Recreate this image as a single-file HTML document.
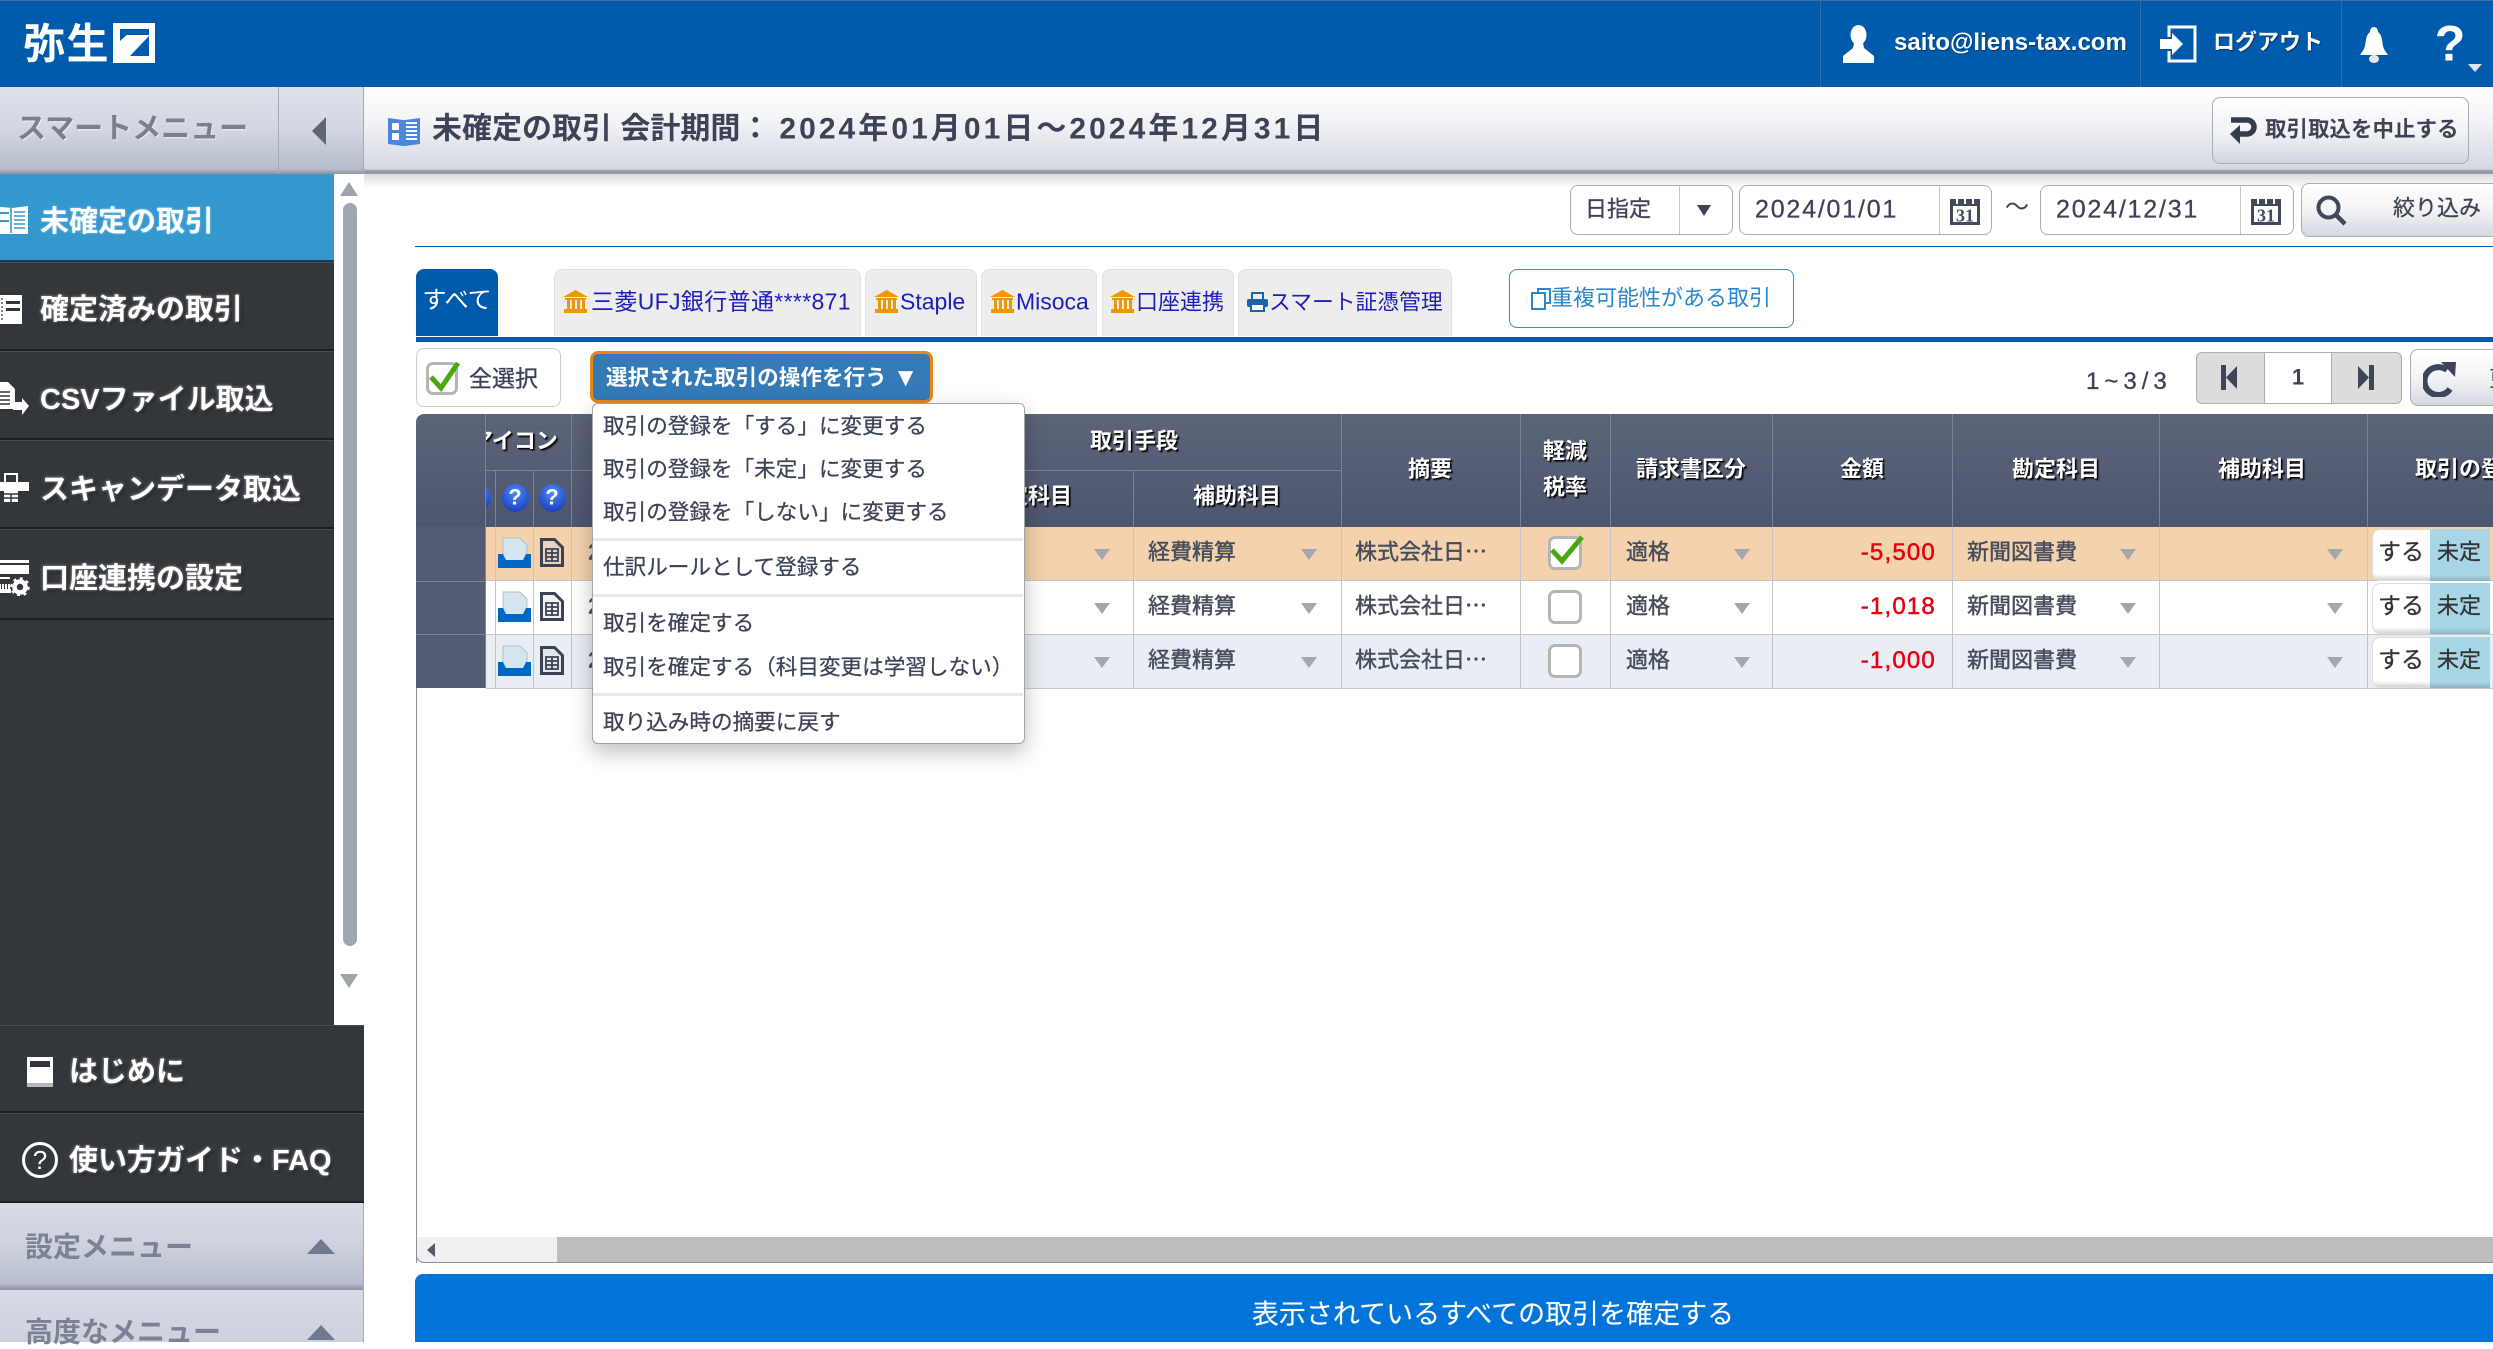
<!DOCTYPE html>
<html lang="ja"><head><meta charset="utf-8"><title>未確定の取引</title>
<style>
html,body{margin:0;padding:0}
body{width:2493px;height:1342px;overflow:hidden;position:relative;background:#fff;font-family:"Liberation Sans","Noto Sans CJK JP",sans-serif;color:#3c4356}
div,span,svg{position:absolute;box-sizing:border-box}
.t{white-space:nowrap;transform:translateY(calc(-50% + 1.500px));line-height:1.2}
.c{white-space:nowrap;transform:translate(-50%,calc(-50% + 1.500px));line-height:1.2}
.n{position:static}
.m{font-size:29px;font-weight:700;color:#fff;text-shadow:0 0 3px rgba(255,255,255,.55),2px 2px 3px rgba(0,0,0,.55)}
.h{font-size:22px;font-weight:700;color:#fff;text-shadow:1px 1px 1px #000,2px 2px 1px rgba(0,0,0,.6)}
.i{height:89px;left:0;width:334px;background:#33373c;border-bottom:2px solid #1c1e21;box-shadow:inset 0 1px 0 #484c52}
.tab{top:269px;height:67px;background:#ededed;border:1px solid #e0e0e0;border-bottom:0;border-radius:8px 8px 0 0}
.tt{font-size:22px;color:#1d1dbb;top:301px}
.d{font-size:21.600px;color:#3c4356;left:603px;-webkit-text-stroke:.25px #3c4356}
.sep{left:593px;width:430px;height:3px;background:#e8e8e8}
.r{left:416px;width:2077px;height:54px;border-bottom:1px solid #c8c8c8}
.v{width:1px;background:#c4c4c4;top:527px;height:161px}
.hv{width:1px;background:#7b8397}
.cell{font-size:22px;color:#454c5c;-webkit-text-stroke:.4px #454c5c}
.tri{width:0;height:0;border-left:8px solid transparent;border-right:8px solid transparent;border-top:11px solid #a4a7ad}
.cb{width:34px;height:34px;border:3px solid #b5b5b5;border-radius:7px;background:#fff}
.amt{font-size:24px;color:#e60012;right:557px;letter-spacing:1.200px;-webkit-text-stroke:.5px #e60012}
.box{background:#fff;border:1px solid #a9adb5;border-radius:8px}
.fr{left:416px;width:70px;background:#535c73}
.st{-webkit-text-stroke:.3px #3c4356}
</style></head><body>

<!-- header -->
<div style="left:0;top:0;width:2493px;height:87px;background:#005bac;border-top:1px solid #3f6f9e"></div>
<span class="t" style="left:23px;top:43px;font-size:42px;font-weight:700;color:#fff;letter-spacing:1.500px">弥生</span>
<svg style="left:113px;top:23px" width="42" height="40" viewBox="0 0 42 40"><rect width="42" height="40" fill="#fff"/><path d="M7 6H36V9H17L7 18z" fill="#005bac"/><path d="M8 6H36V12H14z" fill="#005bac"/><path d="M36 13V33H17z" fill="#005bac"/></svg>
<div style="left:1820px;top:1px;width:1px;height:86px;background:#2c6ea8"></div>
<div style="left:2140px;top:1px;width:1px;height:86px;background:#2c6ea8"></div>
<div style="left:2341px;top:1px;width:1px;height:86px;background:#2c6ea8"></div>
<svg style="left:1843px;top:25px" width="31" height="38" viewBox="0 0 31 38"><ellipse cx="15.500" cy="10" rx="8" ry="10" fill="#fff"/><path d="M11 18h9l1 5 10 8v7H0v-7l10-8z" fill="#fff"/></svg>
<span class="t" style="left:1894px;top:42px;font-size:24px;font-weight:700;color:#fff;text-shadow:1px 1px 1px rgba(0,0,0,.4)">saito@liens-tax.com</span>
<svg style="left:2160px;top:25px" width="37" height="38" viewBox="0 0 37 38"><path d="M9 12V2h26v34H9V26" fill="none" stroke="#fff" stroke-width="3"/><path d="M0 14h12V8l11 11-11 11v-6H0z" fill="#fff"/></svg>
<span class="t" style="left:2213px;top:41px;font-size:22px;font-weight:700;color:#fff;text-shadow:1px 1px 1px rgba(0,0,0,.4)">ログアウト</span>
<svg style="left:2359px;top:26px" width="32" height="38" viewBox="0 0 32 38"><path d="M15 1c3 0 4 3 4 5 4 3 4 8 5 14 1 4 3 6 5 9H1c2-3 4-5 5-9 1-6 1-11 5-14 0-2 1-5 4-5z" fill="#fff"/><ellipse cx="15" cy="33" rx="5" ry="4" fill="#e5e8ee"/></svg>
<span class="c" style="left:2450px;top:42px;font-size:50px;font-weight:700;color:#fff;font-family:'Liberation Sans',sans-serif">?</span>
<div style="left:2468px;top:64px;width:0;height:0;border-left:7px solid transparent;border-right:7px solid transparent;border-top:8px solid #dfe6ef"></div>

<!-- sub bar -->
<div style="left:0;top:87px;width:364px;height:87px;background:linear-gradient(#dfe2ea 0%,#d2d6e1 50%,#b6bccb 94%,#8e93a1 100%);border-right:1px solid #a5a9b5"></div>
<div style="left:278px;top:87px;width:1px;height:87px;background:#a5aab7"></div>
<span class="t" style="left:17px;top:128px;font-size:29px;font-weight:700;color:#7b8090;text-shadow:1px 1px 1px rgba(255,255,255,.6)">スマートメニュー</span>
<div style="left:312px;top:117px;width:0;height:0;border-top:14px solid transparent;border-bottom:14px solid transparent;border-right:14px solid #5f6675"></div>
<div style="left:364px;top:87px;width:2129px;height:87px;background:linear-gradient(#fff 0%,#f2f3f6 40%,#d5d8e2 94%,#8f929b 97%,#9a9da5 100%)"></div>
<div style="left:364px;top:174px;width:2129px;height:14px;background:linear-gradient(rgba(0,0,0,.14),rgba(0,0,0,0))"></div>
<svg style="left:388px;top:117px" width="32" height="29" viewBox="0 0 32 29"><path d="M0 1l15 2 2 0 15-2v26l-15 2-2 0-15-2z" fill="#4a86e0"/><path d="M18 6h11M18 10h11M18 14h11M18 18h11M18 22h11" stroke="#fff" stroke-width="2"/><rect x="4" y="6" width="7" height="7" fill="#fff"/><rect x="4" y="16" width="7" height="7" fill="#fff"/></svg>
<span class="t" style="left:432px;top:128px;font-size:30px;font-weight:700;color:#3c4356">未確定の取引 会計期間：<span class="n" style="letter-spacing:3.050px;margin-left:9px">2024年01月01日～2024年12月31日</span></span>
<div style="left:2212px;top:97px;width:257px;height:67px;border:1px solid #a9adb5;border-radius:8px;background:linear-gradient(#fff 0%,#f1f2f5 55%,#d2d5de 100%)"></div>
<svg style="left:2229px;top:117px" width="28" height="30" viewBox="0 0 28 30"><path d="M2 3h16a7 7 0 0 1 0 14H9" fill="none" stroke="#333b4d" stroke-width="5.500"/><path d="M11 8L1 17l10 10z" fill="#333b4d"/></svg>
<span class="t" style="left:2265px;top:129px;font-size:21.500px;font-weight:700;color:#3c4356">取引取込を中止する</span>

<!-- sidebar -->
<div style="left:0;top:174px;width:334px;height:88px;background:#3498cf;border-bottom:2px solid #1c3a4c"></div>
<div class="i" style="top:262px"></div><div class="i" style="top:351px"></div><div class="i" style="top:440px"></div><div class="i" style="top:529px;height:91px"></div>
<div style="left:0;top:620px;width:334px;height:405px;background:#33373c"></div>
<svg style="left:0;top:205px" width="28" height="30" viewBox="0 0 28 30"><path d="M-10 1l22 2 16-2v28l-16 0-22 0z" fill="#fff"/><path d="M11 3v25M14 7h11M14 11h11M14 15h11M14 19h11M14 23h11" stroke="#3498cf" stroke-width="1.600"/><path d="M0 8h9M0 16h9" stroke="#3498cf" stroke-width="2"/></svg>
<span class="t m" style="left:40px;top:221px;text-shadow:0 0 2px rgba(255,255,255,.5)">未確定の取引</span>
<svg style="left:0;top:295px" width="22" height="29" viewBox="0 0 22 29"><rect x="0" y="0" width="22" height="29" fill="#fff"/><path d="M6 6h14v3H6zM6 13h14v3H6z" fill="#33373c"/><path d="M2 3v24" stroke="#888" stroke-width="2" stroke-dasharray="2 2"/></svg>
<span class="t m" style="left:40px;top:309px">確定済みの取引</span>
<svg style="left:0;top:380px" width="30" height="37" viewBox="0 0 30 37"><path d="M-3 2H8l7 7v20H-3z" fill="#fff"/><path d="M0 12h10M0 16h10M0 20h10M0 24h10" stroke="#33373c" stroke-width="1.600"/><path d="M13 22h9v-4l7 8-7 9v-5h-9z" fill="#fff"/></svg>
<span class="t m" style="left:40px;top:399px">CSVファイル取込</span>
<svg style="left:0;top:472px" width="30" height="31" viewBox="0 0 30 31"><rect x="5" y="2" width="12" height="9" fill="none" stroke="#fff" stroke-width="2"/><rect x="0" y="10" width="29" height="9" fill="#fff"/><rect x="4" y="19" width="14" height="11" fill="#fff"/><path d="M4 22h14M4 26h14M11 22v8" stroke="#33373c" stroke-width="1.500"/></svg>
<span class="t m" style="left:40px;top:489px">スキャンデータ取込</span>
<svg style="left:0;top:558px" width="30" height="38" viewBox="0 0 30 38"><rect x="0" y="2" width="29" height="3" fill="#fff"/><rect x="0" y="7" width="29" height="9" fill="#fff"/><rect x="0" y="19" width="10" height="2" fill="#fff"/><path d="M0 26h1v5h1v-5h2v5h1v-5h2v5h1v-5h2v5h1v4H0z" fill="#fff"/><circle cx="20" cy="29" r="5.500" fill="none" stroke="#fff" stroke-width="4.500"/><circle cx="20" cy="29" r="8.500" fill="none" stroke="#fff" stroke-width="2.500" stroke-dasharray="3 3.600"/></svg>
<span class="t m" style="left:40px;top:578px">口座連携の設定</span>

<!-- side scrollbar -->
<div style="left:334px;top:174px;width:30px;height:851px;background:#fff"></div>
<div style="left:340px;top:182px;width:0;height:0;border-left:9px solid transparent;border-right:9px solid transparent;border-bottom:14px solid #9ea3ad"></div>
<div style="left:343px;top:203px;width:14px;height:743px;border-radius:7px;background:#a0a6b2"></div>
<div style="left:340px;top:974px;width:0;height:0;border-left:9px solid transparent;border-right:9px solid transparent;border-top:14px solid #9ea3ad"></div>

<div style="left:0;top:1025px;width:364px;height:88px;background:#33373c;border-top:1px solid #484c52;border-bottom:2px solid #1c1e21"></div>
<div style="left:0;top:1113px;width:364px;height:90px;background:#33373c;border-top:1px solid #484c52;border-bottom:2px solid #1c1e21"></div>
<svg style="left:27px;top:1057px" width="26" height="30" viewBox="0 0 26 30"><rect width="26" height="30" fill="#fff"/><rect x="3" y="4" width="20" height="6" fill="#33373c"/><rect y="26" width="26" height="4" fill="#b4b8c0"/></svg>
<span class="t m" style="left:69px;top:1071px">はじめに</span>
<svg style="left:21px;top:1141px" width="38" height="38" viewBox="0 0 38 38"><circle cx="19" cy="19" r="16.500" fill="none" stroke="#fff" stroke-width="3"/><text x="19" y="28" text-anchor="middle" font-size="26" fill="#fff" font-family="Liberation Sans">?</text></svg>
<span class="t m" style="left:69px;top:1160px">使い方ガイド・FAQ</span>
<div style="left:0;top:1203px;width:364px;height:87px;background:linear-gradient(#d8dbe5 0%,#cfd3df 45%,#b8becd 92%,#8e93a1 100%);border-right:1px solid #a5a9b5"></div>
<div style="left:0;top:1290px;width:364px;height:52px;background:linear-gradient(#d8dbe5 0%,#cdd1dd 100%);border-right:1px solid #a5a9b5"></div>
<span class="t" style="left:25px;top:1246px;font-size:28px;font-weight:700;color:#7b8293">設定メニュー</span>
<span class="t" style="left:25px;top:1331px;font-size:28px;font-weight:700;color:#7b8293">高度なメニュー</span>
<div style="left:307px;top:1239px;width:0;height:0;border-left:14px solid transparent;border-right:14px solid transparent;border-bottom:15px solid #6e7a8f"></div>
<div style="left:307px;top:1325px;width:0;height:0;border-left:14px solid transparent;border-right:14px solid transparent;border-bottom:15px solid #6e7a8f"></div>

<!-- filter row -->
<div class="box" style="left:1570px;top:185px;width:163px;height:50px"></div>
<div style="left:1679px;top:186px;width:1px;height:48px;background:#c8c8c8"></div>
<span class="t st" style="left:1585px;top:208px;font-size:22px;color:#3c4356">日指定</span>
<div style="left:1697px;top:205px;width:0;height:0;border-left:7px solid transparent;border-right:7px solid transparent;border-top:11px solid #3c4356"></div>
<div class="box" style="left:1739px;top:185px;width:253px;height:50px"></div>
<div style="left:1939px;top:186px;width:1px;height:48px;background:#c8c8c8"></div>
<span class="t st" style="left:1755px;top:208px;font-size:25px;letter-spacing:1.800px;color:#3c4356">2024/01/01</span>
<svg style="left:1950px;top:196px" width="30" height="29" viewBox="0 0 30 29"><rect y="3" width="30" height="26" fill="#414a5c"/><rect x="3" y="10" width="24" height="16" fill="#fff"/><path d="M7 0v8M15 0v8M23 0v8" stroke="#fff" stroke-width="2"/><text x="15" y="25.500" text-anchor="middle" font-size="18" font-weight="700" fill="#414a5c" font-family="Liberation Serif">31</text></svg>
<span class="t" style="left:2005px;top:207px;font-size:24px;color:#3c4356">～</span>
<div class="box" style="left:2040px;top:185px;width:254px;height:50px"></div>
<div style="left:2240px;top:186px;width:1px;height:48px;background:#c8c8c8"></div>
<span class="t st" style="left:2056px;top:208px;font-size:25px;letter-spacing:1.800px;color:#3c4356">2024/12/31</span>
<svg style="left:2251px;top:196px" width="30" height="29" viewBox="0 0 30 29"><rect y="3" width="30" height="26" fill="#414a5c"/><rect x="3" y="10" width="24" height="16" fill="#fff"/><path d="M7 0v8M15 0v8M23 0v8" stroke="#fff" stroke-width="2"/><text x="15" y="25.500" text-anchor="middle" font-size="18" font-weight="700" fill="#414a5c" font-family="Liberation Serif">31</text></svg>
<div style="left:2301px;top:183px;width:200px;height:54px;border:1px solid #a9adb5;border-radius:8px;background:linear-gradient(#fff 0%,#f3f4f6 50%,#d5d8e0 100%)"></div>
<svg style="left:2316px;top:195px" width="31" height="31" viewBox="0 0 31 31"><circle cx="12.500" cy="12.500" r="10" fill="none" stroke="#404859" stroke-width="4"/><path d="M20 20l9 9" stroke="#404859" stroke-width="4.500"/></svg>
<span class="t st" style="left:2393px;top:207px;font-size:22px;color:#3c4356">絞り込み</span>
<div style="left:415px;top:246px;width:2078px;height:1px;background:#005bac"></div>

<!-- tabs -->
<div class="tab" style="left:416px;width:82px;background:#005bac;border:0"></div>
<span class="c" style="left:457px;top:300px;font-size:24px;color:#fff">すべて</span>
<div class="tab" style="left:554px;width:307px"></div>
<div class="tab" style="left:865px;width:112px"></div>
<div class="tab" style="left:981px;width:116px"></div>
<div class="tab" style="left:1102px;width:132px"></div>
<div class="tab" style="left:1238px;width:214px"></div>
<svg style="left:563px;top:290px" width="25" height="23" viewBox="0 0 25 23"><path d="M12.500 0L25 7H0z" fill="#ee9800"/><path d="M2 8h21v2H2zM4 10h3v9H4zM9 10h3v9H9zM14 10h3v9h-3zM19 10h3v9h-3zM1 19h23v4H1z" fill="#ee9800"/></svg>
<span class="t tt" style="left:591px;letter-spacing:.35px;font-size:23px">三菱UFJ銀行普通****871</span>
<svg style="left:874px;top:290px" width="25" height="23" viewBox="0 0 25 23"><path d="M12.500 0L25 7H0z" fill="#ee9800"/><path d="M2 8h21v2H2zM4 10h3v9H4zM9 10h3v9H9zM14 10h3v9h-3zM19 10h3v9h-3zM1 19h23v4H1z" fill="#ee9800"/></svg>
<span class="t tt" style="left:900px;font-size:23px">Staple</span>
<svg style="left:990px;top:290px" width="25" height="23" viewBox="0 0 25 23"><path d="M12.500 0L25 7H0z" fill="#ee9800"/><path d="M2 8h21v2H2zM4 10h3v9H4zM9 10h3v9H9zM14 10h3v9h-3zM19 10h3v9h-3zM1 19h23v4H1z" fill="#ee9800"/></svg>
<span class="t tt" style="left:1016px;font-size:23px">Misoca</span>
<svg style="left:1110px;top:290px" width="25" height="23" viewBox="0 0 25 23"><path d="M12.500 0L25 7H0z" fill="#ee9800"/><path d="M2 8h21v2H2zM4 10h3v9H4zM9 10h3v9H9zM14 10h3v9h-3zM19 10h3v9h-3zM1 19h23v4H1z" fill="#ee9800"/></svg>
<span class="t tt" style="left:1136px">口座連携</span>
<svg style="left:1247px;top:291px" width="21" height="21" viewBox="0 0 21 21"><path d="M5 8V2h11v6" fill="none" stroke="#1764a8" stroke-width="2"/><rect y="8" width="21" height="8" rx="2" fill="#1764a8"/><rect x="4" y="13" width="13" height="7" fill="#fff" stroke="#1764a8" stroke-width="2"/></svg>
<span class="t tt" style="left:1269px;font-size:21.800px">スマート証憑管理</span>
<div style="left:1509px;top:269px;width:285px;height:59px;border:1.500px solid #3a8bc8;border-radius:8px;background:#fff"></div>
<svg style="left:1531px;top:288px" width="21" height="22" viewBox="0 0 21 22"><rect x="1" y="5" width="13" height="16" fill="#fff" stroke="#2b87cc" stroke-width="2"/><path d="M7 4V1h12v14h-4" fill="none" stroke="#2b87cc" stroke-width="2"/></svg>
<span class="t" style="left:1551px;top:297px;font-size:22px;color:#2b87cc">重複可能性がある取引</span>
<div style="left:416px;top:337px;width:2077px;height:5px;background:#005bac"></div>

<!-- toolbar -->
<div style="left:416px;top:348px;width:145px;height:59px;border:1px solid #ccc;border-radius:8px;background:#fff"></div>
<div class="cb" style="left:426px;top:362px;height:33px;width:32px"></div>
<svg style="left:428px;top:360px" width="34" height="34" viewBox="0 0 34 34"><path d="M3 17l10 11L30 3" fill="none" stroke="#48a80f" stroke-width="5"/></svg>
<span class="t st" style="left:469px;top:378px;font-size:23px;color:#3c4356">全選択</span>
<span class="t st" style="left:2086px;top:381px;font-size:24px;letter-spacing:5px;color:#3c4356">1~3/3</span>
<div style="left:2196px;top:352px;width:206px;height:52px;border:1px solid #a9adb5;border-radius:6px;background:#dcdcdc"></div>
<div style="left:2264px;top:353px;width:68px;height:50px;background:#fff;border-left:1px solid #a9adb5;border-right:1px solid #a9adb5"></div>
<span class="c" style="left:2298px;top:376px;font-size:22px;color:#3c4356;font-weight:700">1</span>
<svg style="left:2221px;top:365px" width="16" height="25" viewBox="0 0 16 25"><rect width="5" height="25" fill="#3c4658"/><path d="M16 1v23L5 12.500z" fill="#3c4658"/></svg>
<svg style="left:2358px;top:365px" width="16" height="25" viewBox="0 0 16 25"><rect x="11" width="5" height="25" fill="#3c4658"/><path d="M0 1v23l11-11.500z" fill="#3c4658"/></svg>
<div style="left:2410px;top:349px;width:100px;height:57px;border:1px solid #a9adb5;border-radius:8px;background:linear-gradient(#fff 0%,#f3f4f6 50%,#d5d8e0 100%)"></div>
<svg style="left:2423px;top:361px" width="34" height="36" viewBox="0 0 34 36"><path d="M27 28A14 14 0 1 1 24 9" fill="none" stroke="#3c4658" stroke-width="6"/><path d="M18 1l15 0-1 15z" fill="#3c4658"/></svg>
<span class="t" style="left:2489px;top:378px;font-size:22px;color:#3c4356">更</span>

<!-- table header -->
<div style="left:416px;top:414px;width:2077px;height:113px;border-radius:8px 0 0 0;background:linear-gradient(#5c6479,#4e566f)"></div>
<div class="fr" style="top:527px;height:161px"></div>
<div style="left:416px;top:581px;width:70px;height:1px;background:#7b8397"></div>
<div style="left:416px;top:634px;width:70px;height:1px;background:#7b8397"></div>
<div class="hv" style="left:485px;top:414px;height:274px"></div>
<div class="hv" style="left:571px;top:414px;height:113px"></div>
<div class="hv" style="left:495px;top:470px;height:57px"></div>
<div class="hv" style="left:533px;top:470px;height:57px"></div>
<div style="left:486px;top:470px;width:855px;height:1px;background:#7b8397"></div>
<div class="hv" style="left:1133px;top:470px;height:57px"></div>
<div class="hv" style="left:1341px;top:414px;height:113px"></div>
<div class="hv" style="left:1520px;top:414px;height:113px"></div>
<div class="hv" style="left:1610px;top:414px;height:113px"></div>
<div class="hv" style="left:1772px;top:414px;height:113px"></div>
<div class="hv" style="left:1952px;top:414px;height:113px"></div>
<div class="hv" style="left:2159px;top:414px;height:113px"></div>
<div class="hv" style="left:2367px;top:414px;height:113px"></div>
<div style="left:486px;top:414px;width:85px;height:56px;overflow:hidden"><span class="t h" style="left:-15px;top:26px">アイコン</span></div>
<div style="left:486px;top:484px;width:9px;height:28px;overflow:hidden"><div style="left:-22px;top:0;width:27px;height:27px;border-radius:50%;background:radial-gradient(circle at 50% 30%,#4d8df0,#0f2fb5)"></div></div>
<div style="left:502px;top:484px;width:27px;height:28px;border-radius:50%;background:radial-gradient(circle at 50% 30%,#4d8df0,#0f2fb5)"></div>
<span class="c" style="left:515px;top:496px;font-size:22px;font-weight:700;color:#fff;font-family:'Liberation Sans',sans-serif">?</span>
<div style="left:539px;top:484px;width:27px;height:28px;border-radius:50%;background:radial-gradient(circle at 50% 30%,#4d8df0,#0f2fb5)"></div>
<span class="c" style="left:552px;top:496px;font-size:22px;font-weight:700;color:#fff;font-family:'Liberation Sans',sans-serif">?</span>
<span class="c h" style="left:1134px;top:440px">取引手段</span>
<span class="c h" style="left:1028px;top:495px">勘定科目</span>
<span class="c h" style="left:1237px;top:495px">補助科目</span>
<span class="c h" style="left:1430px;top:468px">摘要</span>
<span class="c h" style="left:1565px;top:450px">軽減</span>
<span class="c h" style="left:1565px;top:486px">税率</span>
<span class="c h" style="left:1691px;top:468px">請求書区分</span>
<span class="c h" style="left:1862px;top:468px">金額</span>
<span class="c h" style="left:2056px;top:468px">勘定科目</span>
<span class="c h" style="left:2262px;top:468px">補助科目</span>
<span class="t h" style="left:2415px;top:468px">取引の登録</span>

<!-- rows -->
<div class="r" style="left:486px;width:2007px;top:527px;background:#f3d2ad"></div>
<div class="r" style="left:486px;width:2007px;top:581px;background:#fff"></div>
<div class="r" style="left:486px;width:2007px;top:635px;background:#e9eef4"></div>
<div class="v" style="left:495px"></div><div class="v" style="left:533px"></div><div class="v" style="left:571px"></div>
<div class="v" style="left:1133px"></div><div class="v" style="left:1341px"></div><div class="v" style="left:1520px"></div><div class="v" style="left:1610px"></div><div class="v" style="left:1772px"></div><div class="v" style="left:1952px"></div><div class="v" style="left:2159px"></div><div class="v" style="left:2367px"></div>

<!-- row icons -->
<svg style="left:498px;top:537px" width="33" height="32" viewBox="0 0 33 32"><path d="M5 1h17l7 7v20H5z" fill="#d6e6ee" stroke="#b8bcc0"/><path d="M0 17h5l3 6h17l3-6h5v14H0z" fill="#0068c4"/></svg>
<svg style="left:540px;top:538px" width="24" height="29" viewBox="0 0 24 29"><path d="M1.500 1.500h13l8 8v18h-21z" fill="#d6dae0" fill-opacity=".35" stroke="#3b4252" stroke-width="3"/><path d="M6 11h12v12H6zM6 15h12M6 19h12M12 11v12" fill="none" stroke="#3b4252" stroke-width="1.800"/></svg>
<svg style="left:498px;top:591px" width="33" height="32" viewBox="0 0 33 32"><path d="M5 1h17l7 7v20H5z" fill="#d6e6ee" stroke="#b8bcc0"/><path d="M0 17h5l3 6h17l3-6h5v14H0z" fill="#0068c4"/></svg>
<svg style="left:540px;top:592px" width="24" height="29" viewBox="0 0 24 29"><path d="M1.500 1.500h13l8 8v18h-21z" fill="#d6dae0" fill-opacity=".35" stroke="#3b4252" stroke-width="3"/><path d="M6 11h12v12H6zM6 15h12M6 19h12M12 11v12" fill="none" stroke="#3b4252" stroke-width="1.800"/></svg>
<svg style="left:498px;top:645px" width="33" height="32" viewBox="0 0 33 32"><path d="M5 1h17l7 7v20H5z" fill="#d6e6ee" stroke="#b8bcc0"/><path d="M0 17h5l3 6h17l3-6h5v14H0z" fill="#0068c4"/></svg>
<svg style="left:540px;top:646px" width="24" height="29" viewBox="0 0 24 29"><path d="M1.500 1.500h13l8 8v18h-21z" fill="#d6dae0" fill-opacity=".35" stroke="#3b4252" stroke-width="3"/><path d="M6 11h12v12H6zM6 15h12M6 19h12M12 11v12" fill="none" stroke="#3b4252" stroke-width="1.800"/></svg>

<!-- row 1 -->
<div class="tri" style="left:1094px;top:549px"></div>
<span class="t cell" style="left:1148px;top:551px">経費精算</span><div class="tri" style="left:1301px;top:549px"></div>
<span class="t cell" style="left:1355px;top:551px">株式会社日⋯</span>
<div class="cb" style="left:1548px;top:536px"></div>
<svg style="left:1549px;top:535px" width="36" height="30" viewBox="0 0 36 30"><path d="M3 15l10 11L33 2" fill="none" stroke="#48a80f" stroke-width="5"/></svg>
<span class="t cell" style="left:1626px;top:551px">適格</span><div class="tri" style="left:1734px;top:549px"></div>
<span class="t amt" style="top:552px">-5,500</span>
<span class="t cell" style="left:1967px;top:551px">新聞図書費</span><div class="tri" style="left:2120px;top:549px"></div><div class="tri" style="left:2327px;top:549px"></div>
<!-- row 2 -->
<div class="tri" style="left:1094px;top:603px"></div>
<span class="t cell" style="left:1148px;top:605px">経費精算</span><div class="tri" style="left:1301px;top:603px"></div>
<span class="t cell" style="left:1355px;top:605px">株式会社日⋯</span>
<div class="cb" style="left:1548px;top:590px"></div>
<span class="t cell" style="left:1626px;top:605px">適格</span><div class="tri" style="left:1734px;top:603px"></div>
<span class="t amt" style="top:606px">-1,018</span>
<span class="t cell" style="left:1967px;top:605px">新聞図書費</span><div class="tri" style="left:2120px;top:603px"></div><div class="tri" style="left:2327px;top:603px"></div>
<!-- row 3 -->
<div class="tri" style="left:1094px;top:657px"></div>
<span class="t cell" style="left:1148px;top:659px">経費精算</span><div class="tri" style="left:1301px;top:657px"></div>
<span class="t cell" style="left:1355px;top:659px">株式会社日⋯</span>
<div class="cb" style="left:1548px;top:644px"></div>
<span class="t cell" style="left:1626px;top:659px">適格</span><div class="tri" style="left:1734px;top:657px"></div>
<span class="t amt" style="top:660px">-1,000</span>
<span class="t cell" style="left:1967px;top:659px">新聞図書費</span><div class="tri" style="left:2120px;top:657px"></div><div class="tri" style="left:2327px;top:657px"></div>

<!-- する/未定 -->
<div style="left:2372px;top:529px;width:58px;height:52px;background:linear-gradient(#fff 88%,#d0d3d8);border-radius:8px 0 0 8px;border:1px solid #ddd;border-right:0"></div>
<div style="left:2430px;top:529px;width:60px;height:52px;background:linear-gradient(#a8d6e6 88%,#8ab4c4)"></div>
<span class="c" style="left:2401px;top:551px;font-size:23px;color:#333;-webkit-text-stroke:.3px #333">する</span><span class="c" style="left:2459px;top:551px;font-size:22px;color:#333;-webkit-text-stroke:.3px #333">未定</span>
<div style="left:2372px;top:583px;width:58px;height:51px;background:linear-gradient(#fff 88%,#d0d3d8);border-radius:8px 0 0 8px;border:1px solid #ddd;border-right:0"></div>
<div style="left:2430px;top:583px;width:60px;height:51px;background:linear-gradient(#a8d6e6 88%,#8ab4c4)"></div>
<span class="c" style="left:2401px;top:605px;font-size:23px;color:#333;-webkit-text-stroke:.3px #333">する</span><span class="c" style="left:2459px;top:605px;font-size:22px;color:#333;-webkit-text-stroke:.3px #333">未定</span>
<div style="left:2372px;top:637px;width:58px;height:51px;background:linear-gradient(#fff 88%,#d0d3d8);border-radius:8px 0 0 8px;border:1px solid #ddd;border-right:0"></div>
<div style="left:2430px;top:637px;width:60px;height:51px;background:linear-gradient(#a8d6e6 88%,#8ab4c4)"></div>
<span class="c" style="left:2401px;top:659px;font-size:23px;color:#333;-webkit-text-stroke:.3px #333">する</span><span class="c" style="left:2459px;top:659px;font-size:22px;color:#333;-webkit-text-stroke:.3px #333">未定</span>

<!-- panel bottom -->
<div style="left:416px;top:688px;width:1px;height:575px;background:#8b8f98"></div>
<div style="left:416px;top:1237px;width:141px;height:26px;background:#f0f0f0;border-bottom:1px solid #8b8f98;border-left:1px solid #8b8f98;border-radius:0 0 0 8px"></div>
<div style="left:557px;top:1237px;width:1936px;height:26px;background:#bdbdbd;border-bottom:1px solid #8b8f98"></div>
<div style="left:427px;top:1243px;width:0;height:0;border-top:7px solid transparent;border-bottom:7px solid transparent;border-right:8px solid #555b66"></div>
<div style="left:415px;top:1274px;width:2078px;height:68px;background:#0074d9;border-radius:8px 0 0 0"></div>
<span class="c" style="left:1493px;top:1313px;font-size:27px;color:#fff;text-shadow:0 0 1px rgba(255,255,255,.4)">表示されているすべての取引を確定する</span>

<!-- row id digits behind dropdown -->
<span class="t cell" style="left:588px;top:551px">2</span>
<span class="t cell" style="left:588px;top:605px">2</span>
<span class="t cell" style="left:588px;top:659px">2</span>

<!-- action button -->
<div style="left:590px;top:351px;width:343px;height:52px;background:#337ab7;border:3px solid #e8861a;border-radius:8px"></div>
<span class="t" style="left:606px;top:376px;font-size:21.600px;font-weight:700;color:#fff">選択された取引の操作を行う <span class="n" style="font-size:26px;vertical-align:-1px">▼</span></span>

<!-- dropdown -->
<div style="left:592px;top:403px;width:433px;height:341px;background:#fff;border:1px solid #a5a5a5;border-radius:6px;box-shadow:0 8px 22px rgba(0,0,0,.26);z-index:2"></div>
<div style="z-index:3;left:0;top:0;width:0;height:0">
<span class="t d" style="top:425px">取引の登録を「する」に変更する</span>
<span class="t d" style="top:468px">取引の登録を「未定」に変更する</span>
<span class="t d" style="top:511px">取引の登録を「しない」に変更する</span>
<div class="sep" style="top:538px"></div>
<span class="t d" style="top:566px">仕訳ルールとして登録する</span>
<div class="sep" style="top:594px"></div>
<span class="t d" style="top:622px">取引を確定する</span>
<span class="t d" style="top:666px">取引を確定する（科目変更は学習しない）</span>
<div class="sep" style="top:693px"></div>
<span class="t d" style="top:721px">取り込み時の摘要に戻す</span>
</div>
</body></html>
